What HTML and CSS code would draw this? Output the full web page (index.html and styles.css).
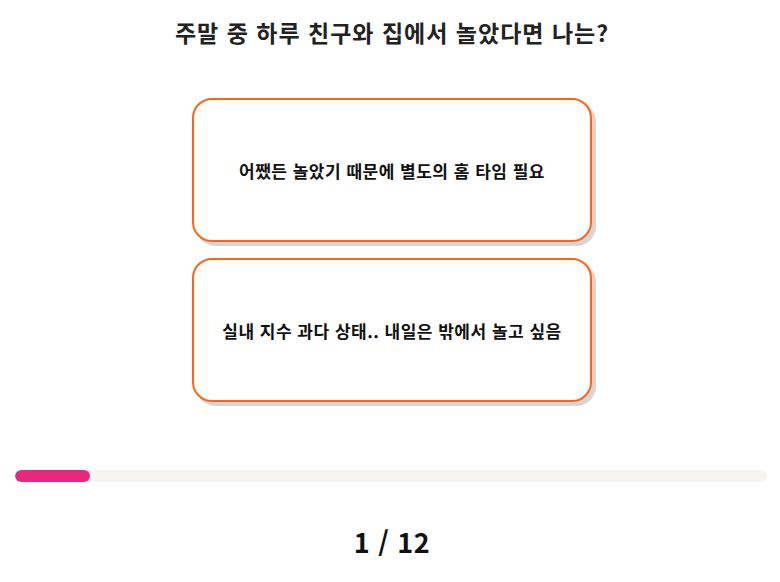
FILE: index.html
```html
<!DOCTYPE html>
<html lang="ko">
<head>
<meta charset="utf-8">
<link rel="stylesheet" href="styles.css">
</head>
<body>
<main class="quiz">
  <h1 class="question">주말 중 하루 친구와 집에서 놀았다면 나는?</h1>
  <div class="answers">
    <button class="answer">어쨌든 놀았기 때문에 별도의 홈 타임 필요</button>
    <button class="answer">실내 지수 과다 상태.. 내일은 밖에서 놀고 싶음</button>
  </div>
  <div class="progress"><div class="progress-fill" style="width:10%"></div></div>
  <div class="counter">1 / 12</div>
</main>
</body>
</html>
```
FILE: styles.css
```css
* { box-sizing: border-box; }
body {
  margin: 0;
  background: #fff;
  font-family: "Noto Sans CJK KR", "Noto Sans", sans-serif;
  color: #111;
}
.quiz {
  width: 780px;
  height: 582px;
  padding-left: 4px;
  display: flex;
  flex-direction: column;
  align-items: center;
}
.question {
  margin: 17px 0 0;
  font-size: 23px;
  line-height: 31px;
  letter-spacing: 1px;
  font-weight: 700;
  color: #222;
}
.answers {
  margin-top: 50px;
  display: flex;
  flex-direction: column;
  gap: 16px;
}
.answer {
  width: 400px;
  height: 144px;
  border: 2px solid #ff6415;
  border-radius: 20px;
  background: #fff;
  box-shadow: 4px 4px 0 #d6d6d6;
  font-family: inherit;
  font-size: 17px;
  letter-spacing: 0.5px;
  font-weight: 700;
  color: #111;
  padding: 0;
}
.progress {
  margin-top: 68px;
  width: 752px;
  height: 12px;
  border-radius: 6px;
  background: #f8f5f0;
  overflow: hidden;
  align-self: flex-start;
  margin-left: 11px;
}
.progress-fill {
  height: 100%;
  background: #e8277f;
  border-radius: 6px;
}
.counter {
  margin-top: 42px;
  font-size: 27px;
  line-height: 36px;
  letter-spacing: 0.5px;
  font-weight: 700;
  color: #111;
}
```
